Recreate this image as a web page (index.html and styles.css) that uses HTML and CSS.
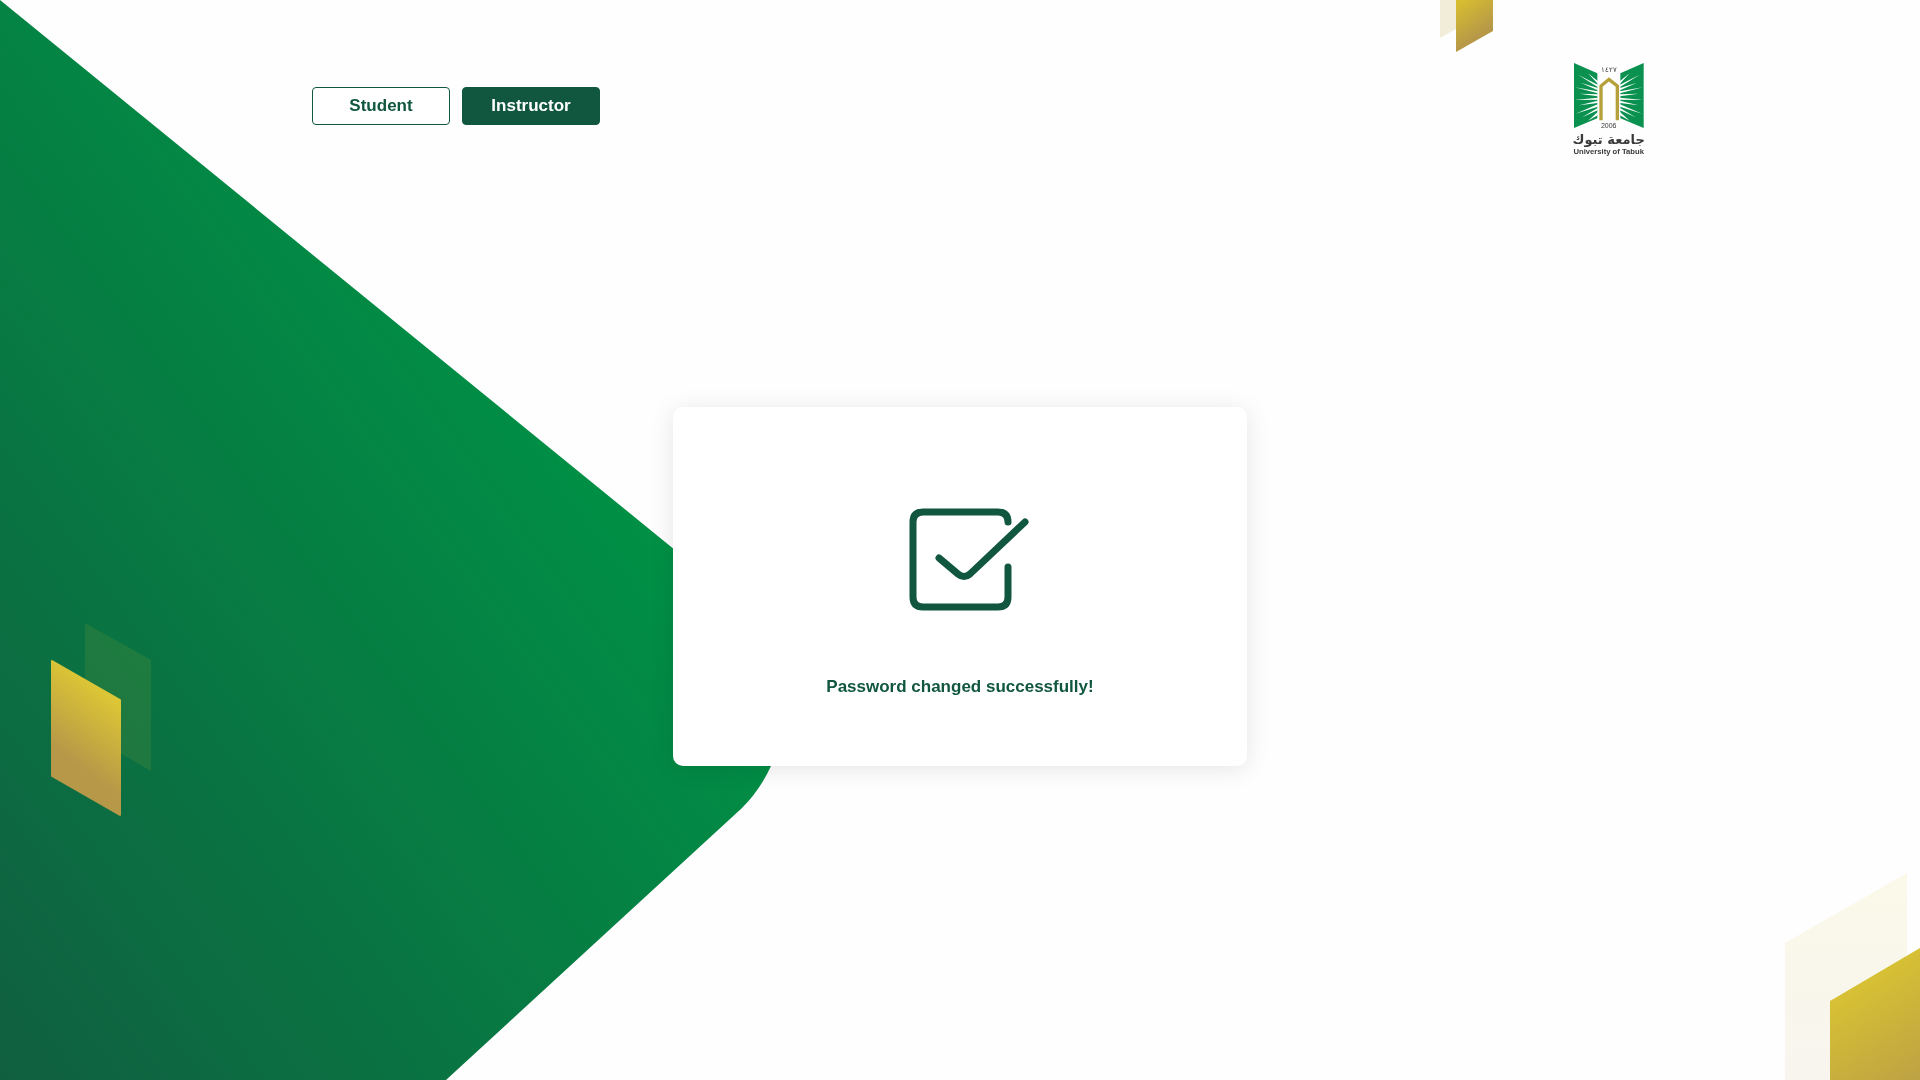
FILE: index.html
```html
<!DOCTYPE html>
<html lang="en">
<head>
<meta charset="utf-8">
<meta name="viewport" content="width=device-width, initial-scale=1">
<title>Password changed</title>
<link rel="stylesheet" href="styles.css">
</head>
<body>
<svg class="backdrop" viewBox="0 0 1920 1080" preserveAspectRatio="xMidYMid slice" aria-hidden="true">
  <defs>
    <linearGradient id="green" gradientUnits="userSpaceOnUse" x1="0" y1="1080" x2="692" y2="572">
      <stop offset="0" stop-color="#105f40"/>
      <stop offset="1" stop-color="#009045"/>
    </linearGradient>
    <linearGradient id="gold-left" x1="0.6" y1="0.15" x2="0.4" y2="0.75">
      <stop offset="0" stop-color="#dcc635"/>
      <stop offset="0.9" stop-color="#b69848"/>
    </linearGradient>
    <linearGradient id="gold-top" x1="0.2" y1="0" x2="0.6" y2="0.8">
      <stop offset="0" stop-color="#d6bd30"/>
      <stop offset="0.9" stop-color="#b69848"/>
    </linearGradient>
    <linearGradient id="gold-corner" gradientUnits="userSpaceOnUse" x1="1850" y1="985" x2="1920" y2="1090">
      <stop offset="0" stop-color="#d8c233"/>
      <stop offset="1" stop-color="#bb9f45"/>
    </linearGradient>
    <linearGradient id="cream" x1="0" y1="0" x2="0" y2="1">
      <stop offset="0" stop-color="#fbf9e9"/>
      <stop offset="1" stop-color="#f7f5ee"/>
    </linearGradient>
  </defs>
  <path fill="url(#green)" d="M0 0L740 603Q812 680 771 766Q760 790 742 808L446 1080H0Z"/>
  <path fill="#dcc635" fill-opacity=".1" d="M85 623L151 660V771L85 733Z"/>
  <path fill="url(#gold-left)" stroke="url(#gold-left)" stroke-width="2" stroke-linejoin="round" d="M52 661L120 700V815L52 776Z"/>
  <path fill="#f2edd9" d="M1440 0H1456V29L1440 38Z"/>
  <path fill="url(#gold-top)" d="M1456 0H1493V31L1456 52Z"/>
  <path fill="url(#cream)" d="M1785 943L1907 873V1080H1785Z"/>
  <path fill="url(#gold-corner)" d="M1830 1001L1920 948V1080H1830Z"/>
</svg>
<div class="page">
  <header class="header">
    <nav class="roles" aria-label="Account type">
      <button class="role" type="button">Student</button>
      <button class="role role-active" type="button">Instructor</button>
    </nav>
    <a class="logo" href="#" aria-label="University of Tabuk">
      <svg class="logo-mark" viewBox="30 30 228 300">
        <g id="wing">
          <path fill="#0a9150" d="M42 39L112 70V205L42 234Z"/>
          <path fill="#fff" d="M113 93L84 70L113 101ZM113 104L54 74L113 111ZM113 114L62 98L113 121ZM113 124L45 112L113 130ZM113 133L58 131L113 139ZM113 143L44 150L113 149ZM113 152L58 166L113 159ZM113 163L47 191L113 170ZM113 174L66 202L113 181ZM113 186L84 212L113 196Z"/>
        </g>
        <use href="#wing" transform="translate(293 0) scale(-1 1)"/>
        <path fill="none" stroke="#b5a03a" stroke-width="10" d="M123 211V108L147 88L172 108V211"/>
        <text class="logo-year" x="146" y="67">١٤٢٧</text>
        <text class="logo-year" x="146" y="233">2006</text>
        <text class="logo-arabic" x="146" y="281">جامعة تبوك</text>
        <text class="logo-name" x="146" y="312">University of Tabuk</text>
      </svg>
    </a>
  </header>
  <main class="content">
    <section class="card" role="status">
      <svg class="check" viewBox="0 0 104 104" aria-hidden="true">
        <path d="M100 14V14Q100 4 90 4H15Q5 4 5 14V89Q5 99 15 99H90Q100 99 100 89V59"/>
        <path d="M31 50L50 66Q56 71 62 66L117 14"/>
      </svg>
      <p class="message">Password changed successfully!</p>
    </section>
  </main>
</div>
</body>
</html>
```
FILE: styles.css
```css
* {
  box-sizing: border-box;
}

body {
  margin: 0;
  background: #fefefe;
  color: #11573f;
  font-family: "Liberation Sans", Arial, sans-serif;
}

.backdrop {
  position: fixed;
  inset: 0;
  width: 100%;
  height: 100%;
}

.page {
  position: relative;
  display: flex;
  flex-direction: column;
  min-height: 100vh;
}

.header {
  display: flex;
  justify-content: space-between;
  align-items: flex-start;
  padding: 60px 274px 0 312px;
}

.roles {
  display: flex;
  gap: 12px;
  padding-top: 27px;
}

.role {
  width: 138px;
  height: 38px;
  padding: 0;
  border: 1px solid #11573f;
  border-radius: 4px;
  background: #fff;
  color: #11573f;
  font: bold 17px/24px "Liberation Sans", Arial, sans-serif;
  cursor: pointer;
}

.role-active {
  background: #11573f;
  color: #fff;
}

.logo {
  display: block;
}

.logo-mark {
  display: block;
  width: 76px;
  height: 100px;
  overflow: visible;
}

.logo-mark text {
  fill: #3a3a3c;
  text-anchor: middle;
}

.logo-year {
  font-size: 21px;
}

.logo-arabic {
  font-family: "DejaVu Sans", sans-serif;
  font-size: 39px;
  font-weight: bold;
}

.logo-name {
  font-size: 23px;
  font-weight: bold;
}

.content {
  flex: 1;
  display: flex;
  justify-content: center;
  align-items: center;
  padding-bottom: 67px;
}

.card {
  display: flex;
  flex-direction: column;
  align-items: center;
  gap: 63px;
  width: 574px;
  max-width: 100%;
  padding: 101px 24px 67px;
  border-radius: 10px;
  background: #fff;
  box-shadow: 0 3px 24px rgba(0, 0, 0, 0.1);
}

.check {
  width: 104px;
  height: 104px;
  overflow: visible;
  fill: none;
  stroke: #11573f;
  stroke-width: 7;
  stroke-linecap: round;
}

.message {
  margin: 0;
  font-size: 17px;
  font-weight: bold;
  line-height: 24px;
}
```
